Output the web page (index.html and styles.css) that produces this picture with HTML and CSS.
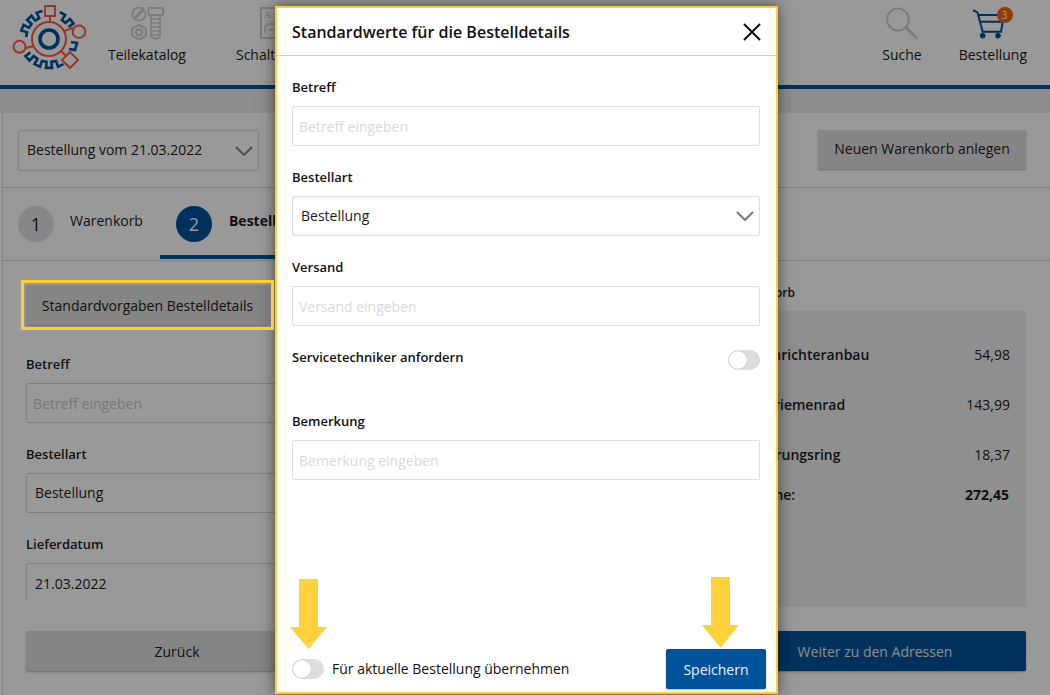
FILE: index.html
```html
<!DOCTYPE html>
<html lang="de">
<head>
<meta charset="utf-8">
<title>Bestellung</title>
<link rel="stylesheet" href="styles.css">
</head>
<body>
<div class="app">
  <header class="topnav">
    <svg class="logo" viewBox="0 0 90 72" width="90" height="72">
      <g fill="none" stroke="#00529b" stroke-width="2.6" stroke-linejoin="miter">
        <polyline points="26.1,37 27,32.3 21.3,30.5 23.6,24.9 28.9,27.8 31.6,23.9 27.1,20 31.5,15.8 35.2,20.6 39.3,18.2 36.7,12.7 42.5,11"/>
        <polyline points="59.9,12.1 65.2,15 61.9,19.9 65.5,23 69.9,18.9 73.6,23.6 68.5,26.8"/>
        <polyline points="63.5,64.1 58,66.6 56.1,60.9 51.4,61.9 52,67.9 46,67.9 46.6,61.9 41.9,60.9 40,66.6 34.5,64.1 37.5,58.9 33.6,56.1 29.6,60.5 25.5,56.1 30.4,52.5"/>
        <polyline points="71,42 77,43 75,50 69,49"/>
        <circle cx="49" cy="39" r="9" stroke-width="3.6"/>
      </g>
      <g fill="none" stroke="#ff5a48" stroke-width="2">
        <circle cx="49" cy="39" r="17"/>
        <rect x="45" y="6" width="10" height="10"/>
        <path d="M50 16v6M64 31l9-3M34 46l-8.500 2M61 51l5 5"/>
        <circle cx="79" cy="31.700" r="6.300"/>
        <circle cx="19.500" cy="46.700" r="6"/>
        <path d="M70 52l8 8-8 8-8-8z"/>
      </g>
    </svg>
    <nav class="nav-left">
      <a class="nav-item">
        <svg viewBox="0 0 34 33" width="34" height="33" class="nav-icon">
          <g fill="none" stroke="#cfcfcf" stroke-width="2">
            <circle cx="9" cy="7" r="6.500"/>
            <path d="M4.500 11.500l9-9" stroke-width="3"/>
            <path d="M9 18l7 3.500v7.500l-7 3.500-7-3.500v-7.500z"/>
            <circle cx="9" cy="25.200" r="3"/>
            <rect x="18.500" y="1" width="14.500" height="7" rx="1"/>
            <path d="M21 8v22l4.500 2 4.500-2V8M21 12h9M21 16h9M21 20h9M21 24h9M21 28h9" stroke-width="1.600"/>
          </g>
        </svg>
        <span>Teilekatalog</span>
      </a>
      <a class="nav-item nav-doc">
        <svg viewBox="0 0 34 33" width="34" height="33" class="nav-icon">
          <g fill="none" stroke="#cfcfcf" stroke-width="2">
            <rect x="1" y="1" width="32" height="30"/>
            <path d="M5 26v-6l3-3h9v6H8" stroke-width="1.600"/>
          </g>
          <text x="4" y="11" class="doc-letter">A</text>
        </svg>
        <span>Schaltpläne</span>
      </a>
    </nav>
    <nav class="nav-right">
      <a class="nav-item">
        <svg viewBox="0 0 34 33" width="34" height="33" class="nav-icon">
          <circle cx="13" cy="12.500" r="11" fill="none" stroke="#cfcfcf" stroke-width="2"/>
          <path d="M21 20.500l11 11" stroke="#cfcfcf" stroke-width="3"/>
        </svg>
        <span>Suche</span>
      </a>
      <a class="nav-item nav-cart">
        <svg viewBox="0 0 34 33" width="34" height="33" class="nav-icon">
          <g fill="none" stroke="#00529b" stroke-width="2">
            <path d="M0 3l4.500 2.500L9.700 24.700H28L29.700 14.700H7M6 8h22"/>
            <circle cx="9.700" cy="28.700" r="2.400" fill="#00529b" stroke-width="1"/>
            <circle cx="25" cy="28.700" r="2.400" fill="#00529b" stroke-width="1"/>
          </g>
        </svg>
        <span class="badge">3</span>
        <span>Bestellung</span>
      </a>
    </nav>
  </header>
  <div class="band"></div>
  <main class="panel">
    <div class="panel-top">
      <div class="select select-order"><span>Bestellung vom 21.03.2022</span>
        <svg class="chev" viewBox="0 0 18 10" width="18" height="10"><polyline points="1,1 9,9 17,1" fill="none" stroke="#888" stroke-width="2"/></svg>
      </div>
      <button class="btn btn-new">Neuen Warenkorb anlegen</button>
    </div>
    <div class="tabs">
      <div class="tab"><span class="num">1</span><span class="tab-label">Warenkorb</span></div>
      <div class="tab tab-active"><span class="num">2</span><span class="tab-label">Bestelldetails</span></div>
    </div>
    <div class="columns">
      <section class="col">
        <button class="btn btn-defaults">Standardvorgaben Bestelldetails</button>
        <div class="scroll">
          <label class="lbl">Betreff</label>
          <input class="inp" placeholder="Betreff eingeben">
          <label class="lbl">Bestellart</label>
          <div class="select"><span>Bestellung</span></div>
          <label class="lbl">Lieferdatum</label>
          <div class="select select-date"><span>21.03.2022</span></div>
        </div>
        <button class="btn btn-wide">Zurück</button>
      </section>
      <section class="col col-right">
        <div class="sum-title">Warenkorb</div>
        <div class="sum-box">
          <div class="sum-row"><span class="name">Stromrichteranbau</span><span>54,98</span></div>
          <div class="sum-row"><span class="name">Zahnriemenrad</span><span>143,99</span></div>
          <div class="sum-row"><span class="name">Sicherungsring</span><span>18,37</span></div>
          <div class="sum-total"><span class="name">Summe:</span><b>272,45</b></div>
        </div>
        <button class="btn btn-wide btn-primary">Weiter zu den Adressen</button>
      </section>
    </div>
  </main>
</div>

<div class="overlay"></div>

<div class="modal">
  <div class="modal-head">
    <h2>Standardwerte für die Bestelldetails</h2>
    <svg viewBox="0 0 18 18" width="18" height="18"><path d="M1 1l16 16M17 1L1 17" stroke="#111" stroke-width="2" fill="none"/></svg>
  </div>
  <div class="modal-body">
    <div class="field"><label class="lbl-m">Betreff</label><input class="inp-m" placeholder="Betreff eingeben"></div>
    <div class="field"><label class="lbl-m">Bestellart</label>
      <div class="select-m"><span>Bestellung</span>
        <svg viewBox="0 0 18 10" width="18" height="10"><polyline points="1,1 9,9 17,1" fill="none" stroke="#777" stroke-width="2"/></svg>
      </div>
    </div>
    <div class="field"><label class="lbl-m">Versand</label><input class="inp-m" placeholder="Versand eingeben"></div>
    <div class="field service"><label class="lbl-m">Servicetechniker anfordern</label><span class="toggle"></span></div>
    <div class="field"><label class="lbl-m">Bemerkung</label><input class="inp-m" placeholder="Bemerkung eingeben"></div>
  </div>
  <div class="modal-foot">
    <div class="foot-left"><span class="toggle"></span><span class="foot-text">Für aktuelle Bestellung übernehmen</span></div>
    <button class="btn-save">Speichern</button>
  </div>
</div>

<div class="hl"></div>
<svg class="arrow arrow-a" viewBox="0 0 37 70" width="37" height="70"><polygon points="9,0 28,0 28,48 37,48 18.500,70 0,48 9,48"/></svg>
<svg class="arrow arrow-b" viewBox="0 0 37 71" width="37" height="71"><polygon points="9,0 28,0 28,48 37,48 18.500,71 0,48 9,48"/></svg>
</body>
</html>
```
FILE: styles.css
```css
* { box-sizing: border-box; }
html, body { margin: 0; height: 100%; }
body {
  position: relative;
  width: 1050px;
  height: 695px;
  overflow: hidden;
  font-family: "Open Sans", "Liberation Sans", sans-serif;
  font-size: 14px;
  color: #1c1c1c;
  background: #fff;
}
.app { height: 695px; display: flex; flex-direction: column; }

/* header */
.topnav {
  flex: none;
  height: 89px;
  border-bottom: 4px solid #00529b;
  display: flex;
  align-items: flex-start;
  background: #fff;
}
.logo { flex: none; display: block; }
.nav-left { display: flex; gap: 50px; margin-left: 18px; }
.nav-right { display: flex; gap: 37px; margin-left: auto; margin-right: 23px; }
.nav-item { position: relative; display: flex; flex-direction: column; align-items: center; padding-top: 7px; }
.nav-item > span:last-child { margin-top: 5px; line-height: 19px; white-space: nowrap; }
.nav-icon { display: block; }
.nav-doc .nav-icon { margin-left: 6px; }
.nav-cart .nav-icon { margin-right: 6px; }
.doc-letter { font-family: "Liberation Serif", serif; font-size: 9px; font-weight: 700; fill: #cfcfcf; }
.badge {
  position: absolute;
  top: 7px;
  left: 38px;
  width: 16px;
  height: 16px;
  border-radius: 50%;
  background: #ff5f10;
  color: #fff;
  font-size: 10px;
  line-height: 16px;
  text-align: center;
}
.band { flex: none; height: 24px; background: #ebebeb; }

/* panel */
.panel { flex: 1; margin-left: 2px; border-left: 1px solid #ddd; background: #fff; display: flex; flex-direction: column; min-height: 0; }
.panel-top {
  flex: none;
  height: 75px;
  padding: 17px 24px 0 15px;
  border-bottom: 1px solid #d8d8d8;
  display: flex;
  justify-content: space-between;
  align-items: flex-start;
}
.select {
  height: 40px;
  border: 1px solid #d8d8d8;
  border-radius: 2px;
  padding: 0 8px;
  display: flex;
  align-items: center;
  justify-content: space-between;
  line-height: 38px;
  background: #fff;
}
.select-order { width: 241px; height: 41px; padding: 0 5px 2px 8px; }
.select-order .chev { margin-top: 2px; }
.select-date { padding-top: 2px; }
.btn {
  font: inherit;
  color: inherit;
  height: 40px;
  border: 0;
  border-radius: 2px;
  background: #dedede;
  box-shadow: 0 1px 2px rgba(0,0,0,.3);
  padding: 0;
}
.btn-new { width: 208px; height: 39px; padding-bottom: 2px; }
.tabs { flex: none; height: 73px; border-bottom: 1px solid #d8d8d8; display: flex; padding-left: 15px; }
.tab { display: flex; align-items: flex-start; padding-top: 18px; height: 72px; }
.num {
  flex: none;
  width: 36px;
  height: 36px;
  border-radius: 50%;
  background: #e2e2e2;
  font-size: 18px;
  line-height: 36px;
  text-align: center;
}
.tab-label { margin-left: 16px; line-height: 30px; }
.tab-active { margin-left: 17px; padding-left: 16px; padding-right: 16px; border-bottom: 4px solid #00529b; height: 71px; }
.tab-active .num { background: #00529b; color: #fff; }
.tab-active .tab-label { font-weight: 700; margin-left: 17px; }

.columns { flex: 1; display: flex; justify-content: space-between; padding: 24px 24px 0 23px; }
.col { width: 302px; }
.btn-defaults { display: block; width: 243px; background: #dedede; }
.scroll { height: 245px; margin-top: 30px; margin-bottom: 31px; overflow: hidden; }
.lbl { display: block; font-size: 13px; font-weight: 600; line-height: 18px; margin-bottom: 10px; }
.inp {
  display: block;
  width: 100%;
  height: 40px;
  margin-bottom: 22px;
  border: 1px solid #d8d8d8;
  border-radius: 2px;
  padding: 0 6px;
  font: inherit;
  background: #fff;
}
.inp::placeholder { color: #c8c8c8; opacity: 1; }
.scroll .select { margin-bottom: 22px; }
.btn-wide { display: block; width: 302px; }
.btn-primary { background: #00529b; color: #e8e8e8; }
.sum-title { font-size: 12px; font-weight: 600; line-height: 18px; margin: -1px 0 9px; padding-left: 6px; }
.sum-box { height: 296px; background: #eee; border-radius: 3px; padding: 19px 16px 0; margin-bottom: 24px; }
.sum-row { display: flex; justify-content: space-between; line-height: 50px; height: 50px; }
.sum-total { display: flex; justify-content: space-between; line-height: 18px; margin-top: 6px; }
.sum-total b { margin-right: 1px; }
.name { font-weight: 600; }

/* overlay */
.overlay { position: absolute; inset: 0; background: rgba(0,0,0,.4); }

/* modal */
.modal {
  position: absolute;
  left: 275px;
  top: 6px;
  width: 503px;
  height: 688px;
  border: 2px solid #ffcd38;
  background: #fff;
  box-shadow: 0 0 14px rgba(0,0,0,.55);
  display: flex;
  flex-direction: column;
}
.modal-head {
  flex: none;
  height: 48px;
  border-bottom: 1px solid #ccc;
  display: flex;
  align-items: center;
  justify-content: space-between;
  padding: 0 15px;
}
.modal-head h2 { margin: 0; font-size: 16px; font-weight: 600; color: #111; }
.modal-body { flex: 1; padding: 22px 16px 0 15px; }
.field { margin-bottom: 22px; }
.lbl-m { display: block; font-size: 13px; font-weight: 600; line-height: 18px; margin-bottom: 10px; color: #111; }
.inp-m, .select-m {
  display: block;
  width: 100%;
  height: 40px;
  border: 1px solid #ddd;
  border-radius: 2px;
  background: #fff;
  font: inherit;
  padding: 0 6px;
}
.inp-m::placeholder { color: #dadad6; opacity: 1; }
.select-m { display: flex; align-items: center; justify-content: space-between; padding: 0 5px 2px 8px; }
.select-m svg { margin-top: 2px; }
.service { display: flex; justify-content: space-between; align-items: flex-start; height: 42px; }
.service .toggle { margin-top: 2px; }
.toggle {
  flex: none;
  display: block;
  position: relative;
  width: 32px;
  height: 20px;
  border-radius: 10px;
  background: #ddd;
}
.toggle::after {
  content: "";
  position: absolute;
  left: 1px;
  top: 1px;
  width: 18px;
  height: 18px;
  border-radius: 50%;
  background: #fff;
  box-shadow: 0 0 1px rgba(0,0,0,.3);
}
.modal-foot { flex: none; display: flex; justify-content: space-between; align-items: center; padding: 0 10px 3px 15px; }
.foot-left { display: flex; align-items: center; gap: 8px; color: #111; }
.foot-text { margin-top: -2px; }
.btn-save {
  width: 100px;
  height: 40px;
  border: 0;
  border-radius: 2px;
  background: #00529b;
  color: #f2f2f2;
  font: inherit;
  box-shadow: 0 1px 2px rgba(0,0,0,.3);
}

/* annotations */
.hl { position: absolute; left: 21px; top: 280px; width: 253px; height: 50px; border: 3px solid #ffcd38; }
.arrow { position: absolute; display: block; }
.arrow polygon { fill: #ffd13b; }
.arrow-a { left: 290px; top: 579px; }
.arrow-b { left: 702px; top: 577px; }
```
